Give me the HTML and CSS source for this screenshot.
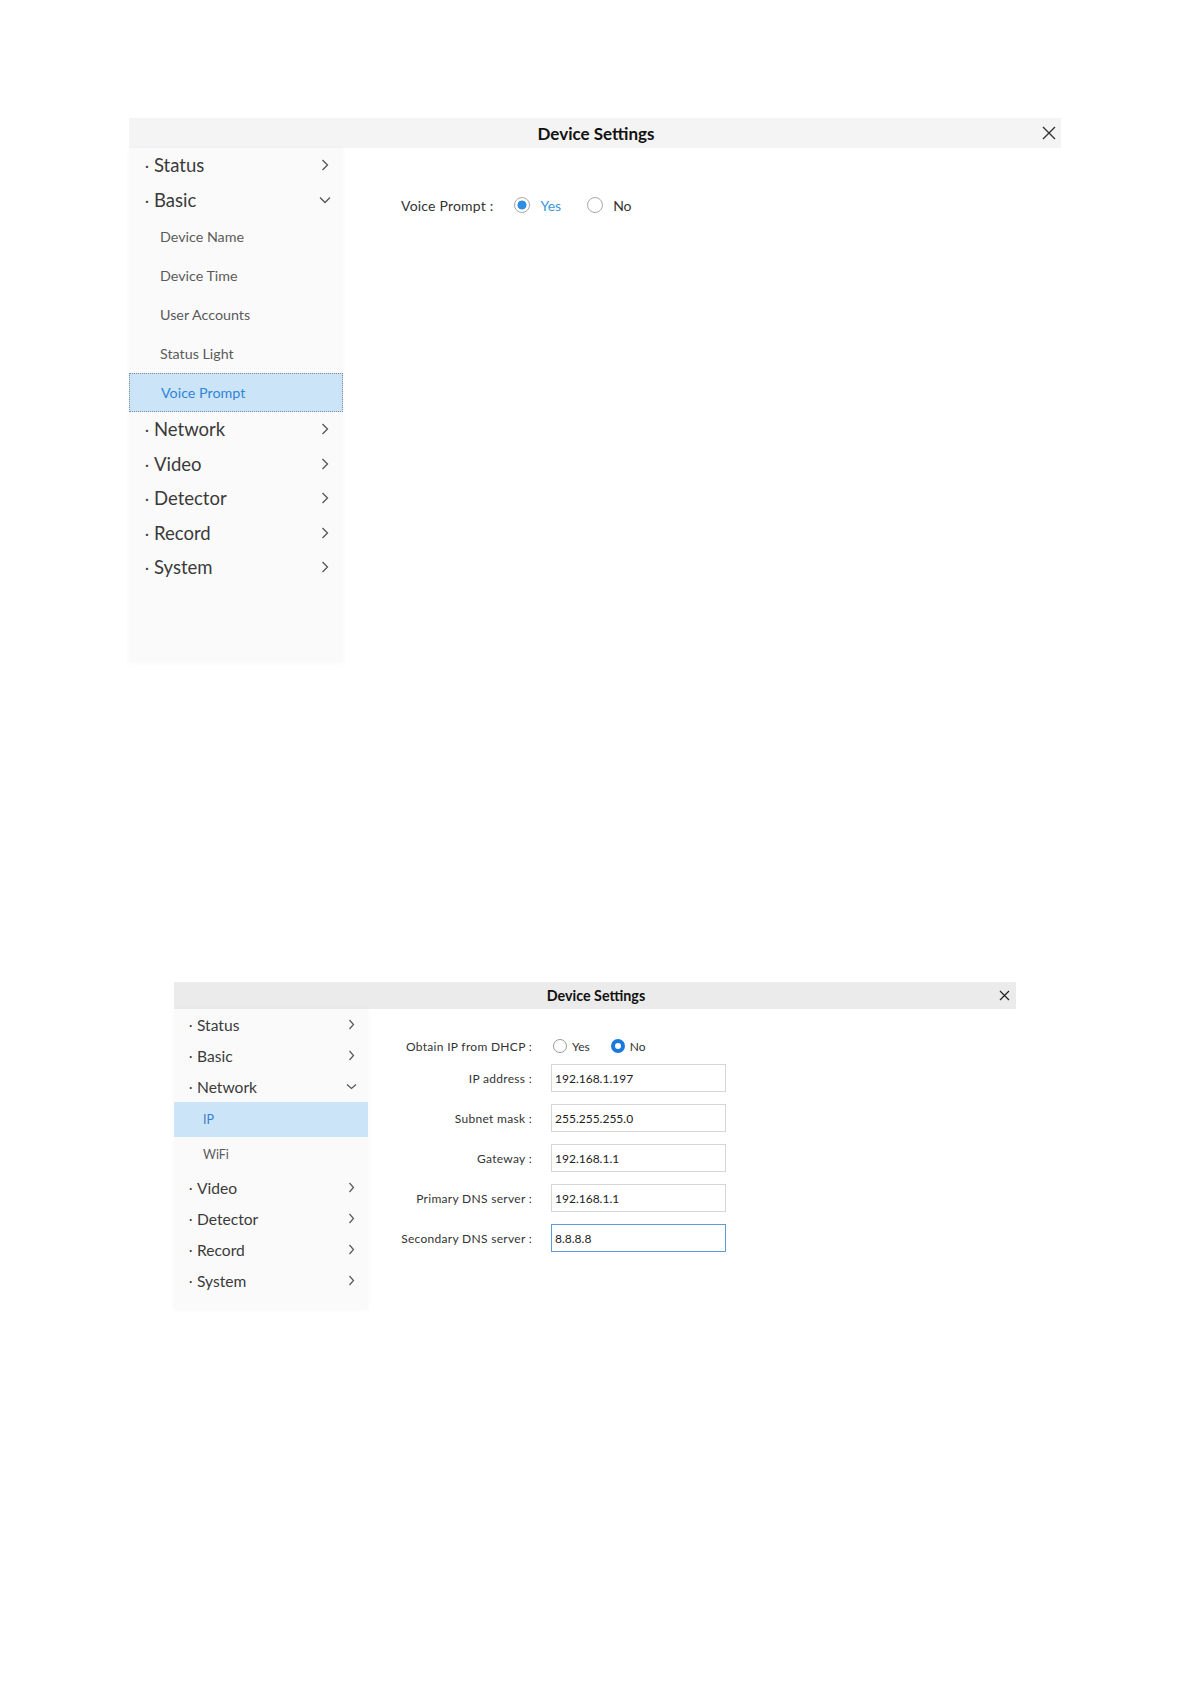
FILE: index.html
```html
<!DOCTYPE html>
<html>
<head>
<meta charset="utf-8">
<link rel="stylesheet" href="styles.css">
</head>
<body>
<section class="panel p1">
  <div class="hdr">
    <span></span>
    <span class="title">Device Settings</span>
    <span class="close"><svg width="14" height="14" viewBox="0 0 14 14"><path d="M1 1 L13 13 M13 1 L1 13" stroke="#333" stroke-width="1.4" fill="none"/></svg></span>
  </div>
  <div class="body">
    <nav class="side">
      <div class="mi"><span class="dot">·</span><span class="txt">Status</span><svg class="chev" width="8" height="12" viewBox="0 0 8 12"><path d="M1.5 1 L6.5 6 L1.5 11" stroke="#555" stroke-width="1.3" fill="none"/></svg></div>
      <div class="mi"><span class="dot">·</span><span class="txt">Basic</span><svg class="chev down" width="12" height="8" viewBox="0 0 12 8"><path d="M1 1.5 L6 6.5 L11 1.5" stroke="#555" stroke-width="1.3" fill="none"/></svg></div>
      <div class="si">Device Name</div>
      <div class="si">Device Time</div>
      <div class="si">User Accounts</div>
      <div class="si">Status Light</div>
      <div class="si sel">Voice Prompt</div>
      <div class="mi"><span class="dot">·</span><span class="txt">Network</span><svg class="chev" width="8" height="12" viewBox="0 0 8 12"><path d="M1.5 1 L6.5 6 L1.5 11" stroke="#555" stroke-width="1.3" fill="none"/></svg></div>
      <div class="mi"><span class="dot">·</span><span class="txt">Video</span><svg class="chev" width="8" height="12" viewBox="0 0 8 12"><path d="M1.5 1 L6.5 6 L1.5 11" stroke="#555" stroke-width="1.3" fill="none"/></svg></div>
      <div class="mi"><span class="dot">·</span><span class="txt">Detector</span><svg class="chev" width="8" height="12" viewBox="0 0 8 12"><path d="M1.5 1 L6.5 6 L1.5 11" stroke="#555" stroke-width="1.3" fill="none"/></svg></div>
      <div class="mi"><span class="dot">·</span><span class="txt">Record</span><svg class="chev" width="8" height="12" viewBox="0 0 8 12"><path d="M1.5 1 L6.5 6 L1.5 11" stroke="#555" stroke-width="1.3" fill="none"/></svg></div>
      <div class="mi"><span class="dot">·</span><span class="txt">System</span><svg class="chev" width="8" height="12" viewBox="0 0 8 12"><path d="M1.5 1 L6.5 6 L1.5 11" stroke="#555" stroke-width="1.3" fill="none"/></svg></div>
    </nav>
    <div class="main">
      <div class="vrow">
        <span class="vlabel">Voice Prompt :</span>
        <span class="radio r-on"></span><span class="rtxt on">Yes</span>
        <span class="radio r-off"></span><span class="rtxt">No</span>
      </div>
    </div>
  </div>
</section>

<section class="panel p2">
  <div class="hdr">
    <span></span>
    <span class="title">Device Settings</span>
    <span class="close"><svg width="11" height="11" viewBox="0 0 11 11"><path d="M1 1 L10 10 M10 1 L1 10" stroke="#222" stroke-width="1.2" fill="none"/></svg></span>
  </div>
  <div class="body">
    <nav class="side">
      <div class="mi"><span class="dot">·</span><span class="txt">Status</span><svg class="chev" width="7" height="11" viewBox="0 0 7 11"><path d="M1.5 1 L5.5 5.5 L1.5 10" stroke="#555" stroke-width="1.2" fill="none"/></svg></div>
      <div class="mi"><span class="dot">·</span><span class="txt">Basic</span><svg class="chev" width="7" height="11" viewBox="0 0 7 11"><path d="M1.5 1 L5.5 5.5 L1.5 10" stroke="#555" stroke-width="1.2" fill="none"/></svg></div>
      <div class="mi"><span class="dot">·</span><span class="txt">Network</span><svg class="chev down" width="11" height="7" viewBox="0 0 11 7"><path d="M1 1.5 L5.5 5.5 L10 1.5" stroke="#555" stroke-width="1.2" fill="none"/></svg></div>
      <div class="si sel">IP</div>
      <div class="si">WiFi</div>
      <div class="mi"><span class="dot">·</span><span class="txt">Video</span><svg class="chev" width="7" height="11" viewBox="0 0 7 11"><path d="M1.5 1 L5.5 5.5 L1.5 10" stroke="#555" stroke-width="1.2" fill="none"/></svg></div>
      <div class="mi"><span class="dot">·</span><span class="txt">Detector</span><svg class="chev" width="7" height="11" viewBox="0 0 7 11"><path d="M1.5 1 L5.5 5.5 L1.5 10" stroke="#555" stroke-width="1.2" fill="none"/></svg></div>
      <div class="mi"><span class="dot">·</span><span class="txt">Record</span><svg class="chev" width="7" height="11" viewBox="0 0 7 11"><path d="M1.5 1 L5.5 5.5 L1.5 10" stroke="#555" stroke-width="1.2" fill="none"/></svg></div>
      <div class="mi"><span class="dot">·</span><span class="txt">System</span><svg class="chev" width="7" height="11" viewBox="0 0 7 11"><path d="M1.5 1 L5.5 5.5 L1.5 10" stroke="#555" stroke-width="1.2" fill="none"/></svg></div>
    </nav>
    <div class="main form">
      <div class="frow dhcp">
        <span class="flabel">Obtain IP from DHCP :</span>
        <span class="fval">
          <span class="radio sm-off"></span><span class="rtxt">Yes</span>
          <span class="radio sm-on"></span><span class="rtxt">No</span>
        </span>
      </div>
      <div class="frow"><span class="flabel">IP address :</span><span class="inp">192.168.1.197</span></div>
      <div class="frow"><span class="flabel">Subnet mask :</span><span class="inp">255.255.255.0</span></div>
      <div class="frow"><span class="flabel">Gateway :</span><span class="inp">192.168.1.1</span></div>
      <div class="frow"><span class="flabel">Primary DNS server :</span><span class="inp">192.168.1.1</span></div>
      <div class="frow"><span class="flabel">Secondary DNS server :</span><span class="inp focus">8.8.8.8</span></div>
    </div>
  </div>
</section>
</body>
</html>
```
FILE: styles.css
```css
* { box-sizing: border-box; }
html, body { margin: 0; padding: 0; background: #fff; }
body {
  font-family: Lato, "Open Sans", "Liberation Sans", sans-serif;
  color: #333;
  width: 1191px;
  height: 1684px;
  overflow: hidden;
}

.panel { display: flex; flex-direction: column; }
.hdr {
  display: grid;
  grid-template-columns: 1fr auto 1fr;
  align-items: center;
}
.hdr .title { font-weight: 700; color: #111; }
.hdr .close { justify-self: end; display: flex; align-items: center; }
.body { display: flex; }
.side {
  display: flex;
  flex-direction: column;
  background: #fafafa;
  box-shadow: 0 0 5px rgba(0, 0, 0, 0.03);
}
.mi { display: flex; align-items: center; color: #3a3a3a; }
.mi .dot { display: inline-block; }
.mi .chev { margin-left: auto; }
.si { display: flex; align-items: center; color: #5a5a5a; }
.si.sel { background: #cce4f8; color: #2f86d6; }

.radio { display: inline-block; border-radius: 50%; flex: none; }
.rtxt { color: #333; }
.rtxt.on { color: #3a97e0; }

/* ---------- Panel 1 ---------- */
.p1 { margin: 118px 0 0 129px; width: 932px; }
.p1 .hdr { height: 30px; background: #f4f4f4; }
.p1 .hdr .title { font-size: 17px; padding-left: 2px; }
.p1 .hdr .close { margin-right: 5px; }
.p1 .side { width: 214px; height: 515px; }
.p1 .mi { height: 34.5px; padding: 0 14px 0 16px; font-size: 18.5px; }
.p1 .mi .chev.down { margin-right: -2px; }
.p1 .mi .dot { width: 9px; font-size: 15px; }
.p1 .si { height: 39px; padding-left: 31px; font-size: 14.3px; }
.p1 .si.sel { border: 1px dotted #7d8b99; }
.p1 .main { padding: 45px 0 0 58px; }
.p1 .vrow { display: flex; align-items: center; height: 24px; font-size: 14px; }
.p1 .vlabel { color: #333; margin-right: 21px; letter-spacing: 0.2px; }
.p1 .radio { width: 16px; height: 16px; border: 1px solid #a8a8a8; background: #fff; }
.p1 .r-on { background: radial-gradient(circle, #2e8ee6 0, #2e8ee6 4.2px, #fff 4.8px); }
.p1 .rtxt { margin-left: 10px; margin-right: 26px; }

/* ---------- Panel 2 ---------- */
.p2 { margin: 319px 0 0 174px; width: 842px; }
.p2 .hdr { height: 27px; background: #ebebeb; }
.p2 .hdr .title { font-size: 14.3px; padding-left: 2px; }
.p2 .hdr .close { margin-right: 6px; }
.p2 .side { width: 194px; height: 301px; }
.p2 .mi { height: 31px; padding: 0 13px 0 15px; font-size: 15.6px; }
.p2 .mi .dot { width: 8px; font-size: 13px; }
.p2 .mi .chev.down { margin-right: -2px; }
.p2 .si { height: 35px; padding-left: 29px; font-size: 12.5px; }
.p2 .si.sel { color: #3a7fcc; }

.form { display: flex; flex-direction: column; padding: 25px 0 0 30px; }
.frow { display: flex; align-items: center; height: 28px; margin-bottom: 12px; }
.frow.dhcp { height: 24px; margin-bottom: 6px; }
.flabel {
  width: 134px;
  margin-right: 19px;
  text-align: right;
  font-size: 12px;
  color: #333;
  letter-spacing: 0.3px;
  white-space: nowrap;
}
.fval { display: flex; align-items: center; font-size: 12px; }
.p2 .radio { width: 14px; height: 14px; }
.sm-off { border: 1px solid #9a9a9a; background: #fff; margin-left: 2px; }
.sm-on { border: 4px solid #1a78e0; background: #fff; }
.p2 .rtxt { margin-left: 5px; margin-right: 21px; }
.inp {
  display: flex;
  align-items: center;
  width: 175px;
  height: 28px;
  border: 1px solid #d6d6d6;
  padding-left: 3px;
  font-size: 12px;
  color: #222;
  background: #fff;
}
.inp.focus { border-color: #5a9bd8; }
```
